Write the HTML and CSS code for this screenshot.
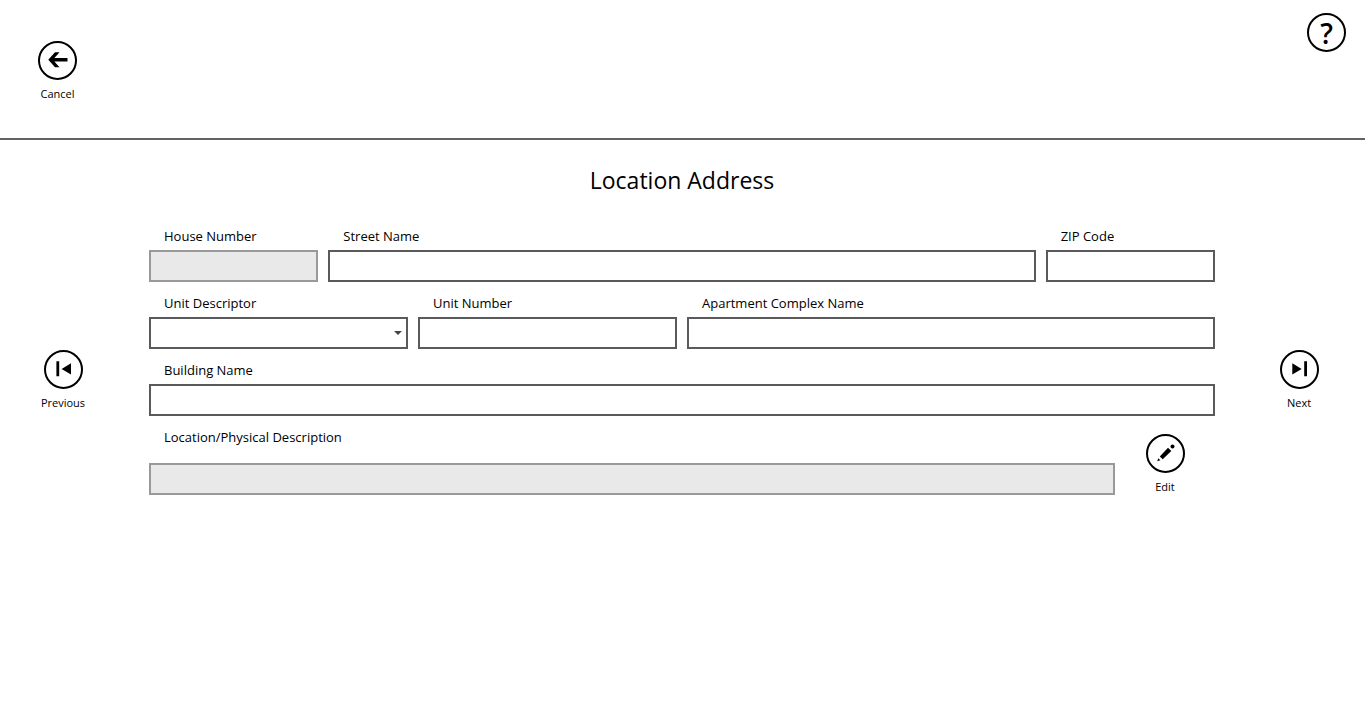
FILE: index.html
```html
<!DOCTYPE html>
<html lang="en">
  <head>
    <meta charset="utf-8" />
    <meta name="viewport" content="width=device-width, initial-scale=1.0" />
    <title>Location Address</title>
    <link rel="stylesheet" href="styles.css">
  </head>
  <body>
    <header class="header">
      <button class="round-button round-button--cancel" type="button">
        <svg class="round-button__icon" viewBox="0 0 39 39" aria-hidden="true">
          <circle cx="19.5" cy="19.5" r="18.5" />
          <path class="solid" d="M10.3 18.7 17 11.2H21.5L16.4 17H29.5V20.4H16.4L21.5 26.2H17Z" />
        </svg>
        <span>Cancel</span>
      </button>
      <button class="help-button" type="button" aria-label="Help">?</button>
    </header>

    <main class="wizard">
      <nav class="wizard__side">
        <button class="round-button" type="button">
          <svg class="round-button__icon" viewBox="0 0 39 39" aria-hidden="true">
            <circle cx="19.5" cy="19.5" r="18.5" />
            <path class="solid" d="M12.4 11.3H15.2V26.3H12.4ZM27 13.3V24.5L17.6 18.9Z" />
          </svg>
          <span>Previous</span>
        </button>
      </nav>

      <form class="form">
        <h1 class="form__title">Location Address</h1>
        <div class="form__grid">
          <div class="field field--2">
            <label class="field__label" for="houseNumber">House Number</label>
            <input class="field__input" id="houseNumber" type="text" disabled />
          </div>
          <div class="field field--8">
            <label class="field__label" for="streetName">Street Name</label>
            <input class="field__input" id="streetName" type="text" />
          </div>
          <div class="field field--2">
            <label class="field__label" for="zipCode">ZIP Code</label>
            <input class="field__input" id="zipCode" type="text" />
          </div>

          <div class="field field--3">
            <label class="field__label" for="unitDescriptor">Unit Descriptor</label>
            <div class="field__select">
              <select class="field__input" id="unitDescriptor">
                <option></option>
              </select>
            </div>
          </div>
          <div class="field field--3">
            <label class="field__label" for="unitNumber">Unit Number</label>
            <input class="field__input" id="unitNumber" type="text" />
          </div>
          <div class="field field--6">
            <label class="field__label" for="complexName">Apartment Complex Name</label>
            <input class="field__input" id="complexName" type="text" />
          </div>

          <div class="field field--12">
            <label class="field__label" for="buildingName">Building Name</label>
            <input class="field__input" id="buildingName" type="text" />
          </div>
        </div>

        <div class="form__description">
          <div class="field field--description">
            <label class="field__label" for="description">Location/Physical Description</label>
            <input class="field__input" id="description" type="text" disabled />
          </div>
          <button class="round-button round-button--edit" type="button">
            <svg class="round-button__icon" viewBox="0 0 39 39" aria-hidden="true">
              <circle cx="19.5" cy="19.5" r="18.5" />
              <path class="solid" d="M13.8 22.4 22 13.8 25.3 17 16.7 25.2ZM12.3 24.3 14.3 26.2 11.2 27.2Z" />
              <circle class="solid" cx="26.5" cy="12.4" r="2" />
            </svg>
            <span>Edit</span>
          </button>
        </div>
      </form>

      <nav class="wizard__side">
        <button class="round-button" type="button">
          <svg class="round-button__icon" viewBox="0 0 39 39" aria-hidden="true">
            <circle cx="19.5" cy="19.5" r="18.5" />
            <path class="solid" d="M12.3 13.3V24.5L21.7 18.9ZM24.2 11.3H27V26.3H24.2Z" />
          </svg>
          <span>Next</span>
        </button>
      </nav>
    </main>
  </body>
</html>
```
FILE: styles.css
```css
body {
  --color-text: #000000;
  --color-border: #5a5a5c;
  --color-border-disabled: #999999;
  --color-disabled: #e9e9e9;

  margin: 0;
  color: var(--color-text);
  background: #ffffff;
  font-family: "Open Sans", "Noto Sans", sans-serif;
  font-size: 13px;
}

*,
*::before,
*::after {
  box-sizing: border-box;
}

.header {
  display: flex;
  align-items: flex-start;
  justify-content: space-between;
  height: 140px;
  padding: 0 19px 0 20px;
  border-bottom: 2px solid #626262;
}

.round-button {
  display: flex;
  flex-direction: column;
  align-items: center;
  gap: 6px;
  width: 75px;
  padding: 0;
  border: none;
  background: none;
  color: inherit;
  font-family: inherit;
  font-size: 11px;
  line-height: 16px;
  cursor: pointer;
}

.round-button--cancel {
  margin-top: 41px;
}

.round-button--edit {
  width: 100px;
}

.round-button__icon {
  width: 39px;
  height: 39px;
  fill: none;
  stroke: #000000;
  stroke-width: 2;
}

.round-button__icon .solid {
  fill: #000000;
  stroke: none;
}

.help-button {
  width: 39px;
  height: 39px;
  margin-top: 13px;
  padding: 0;
  border: 2px solid #000000;
  border-radius: 50%;
  background: none;
  color: inherit;
  font-family: inherit;
  font-size: 28px;
  font-weight: 600;
  line-height: 32px;
  text-align: center;
  cursor: pointer;
}

.wizard {
  display: grid;
  grid-template-columns: 126px 1fr 132px;
}

.wizard__side {
  display: flex;
  align-items: flex-start;
  justify-content: center;
  padding-top: 210px;
}

.form {
  padding: 24px 18px 24px 23px;
}

.form__title {
  margin: 0 0 26px;
  font-size: 23px;
  font-weight: 400;
  line-height: 32px;
  text-align: center;
}

.form__grid {
  display: grid;
  grid-template-columns: repeat(12, 1fr);
  gap: 7px 10px;
}

.form__description {
  display: flex;
  align-items: flex-end;
  margin-top: 7px;
}

.field {
  display: flex;
  flex-direction: column;
  min-width: 0;
}

.field--2 {
  grid-column: span 2;
}

.field--3 {
  grid-column: span 3;
}

.field--6 {
  grid-column: span 6;
}

.field--8 {
  grid-column: span 8;
}

.field--12 {
  grid-column: span 12;
}

.field--description {
  flex: 1;
  gap: 12px;
}

.field__label {
  padding-left: 15px;
  line-height: 28px;
}

.field__input {
  width: 100%;
  height: 32px;
  padding: 0 8px;
  border: 2px solid var(--color-border);
  border-radius: 0;
  outline: none;
  background: #ffffff;
  color: inherit;
  font: inherit;
  appearance: none;
}

.field__input:focus {
  border-color: #000000;
}

.field__input:disabled {
  border-color: var(--color-border-disabled);
  background: var(--color-disabled);
}

.field__select {
  position: relative;
}

.field__select::after {
  content: "";
  position: absolute;
  top: 14px;
  right: 6px;
  border: 4px solid transparent;
  border-top-color: #444444;
  border-bottom: none;
  pointer-events: none;
}
```
